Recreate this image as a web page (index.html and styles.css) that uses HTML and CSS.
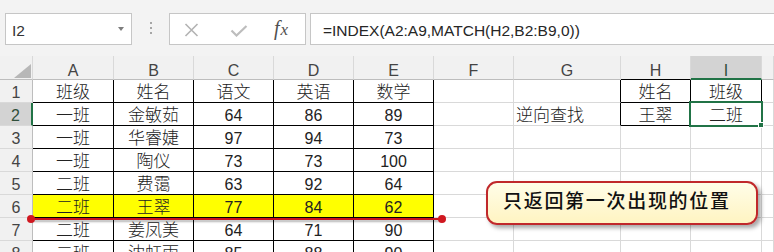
FILE: index.html
```html
<!DOCTYPE html>
<html>
<head>
<meta charset="utf-8">
<link rel="stylesheet" href="styles.css">
</head>

<body>
<div class="page">

  <div class="toolbar">
    <div class="namebox"><span>I2</span><span class="drop"></span></div>
    <div class="dots"><i></i><i></i><i></i></div>
    <div class="fxbox">
      <svg class="cancel" width="15" height="14" viewBox="0 0 15 14">
        <path d="M1.5 1 L13.5 13 M13.5 1 L1.5 13" stroke="#b3b3b3" stroke-width="1.6" fill="none"/>
      </svg>
      <svg class="enter" width="18" height="12" viewBox="0 0 18 12">
        <path d="M1.5 5.5 L6.5 10.5 L16.5 1" stroke="#bdbdbd" stroke-width="2.2" fill="none"/>
      </svg>
      <span class="fx">f<span class="fx-x">x</span></span>
    </div>
    <div class="formula">=INDEX(A2:A9,MATCH(H2,B2:B9,0))</div>
  </div>

  <div class="sheet" id="sheet"></div>

  <div class="arrow"></div>
  <div class="callout">只返回第一次出现的位置</div>

</div>

<script>

var cols = ["A", "B", "C", "D", "E", "F", "G", "H", "I", ""];

var rows = [
  ["班级", "姓名", "语文", "英语", "数学", "", "", "姓名", "班级"],
  ["一班", "金敏茹", "64", "86", "89", "", "逆向查找", "王翠", "二班"],
  ["一班", "华睿婕", "97", "94", "73"],
  ["一班", "陶仪", "73", "73", "100"],
  ["二班", "费霭", "63", "92", "64"],
  ["二班", "王翠", "77", "84", "62"],
  ["二班", "姜凤美", "64", "71", "90"],
  ["二班", "沈虹雨", "85", "88", "90"]
];

var sheet = document.getElementById("sheet");

function cell(cls, text) {
  var d = document.createElement("div");
  d.className = cls;
  d.textContent = text;
  sheet.appendChild(d);
  return d;
}

// column headers
var corner = cell("corner", "");
corner.innerHTML = '<span class="tri"></span>';
for (var c = 0; c < cols.length; c++) {
  var cls = "hd";
  if (cols[c] == "H") cls += " bb";
  if (cols[c] == "I") cls += " hd-sel";
  cell(cls, cols[c]);
}

// rows
for (var r = 0; r < rows.length; r++) {
  cell(r == 1 ? "rh rh-sel" : "rh", r + 1);
  for (var c = 0; c < 10; c++) {
    var v = rows[r][c] || "";
    var cls = "c";
    if (c < 5) cls += " br bb";
    if (c == 6 && r < 2) cls += " br";
    if ((c == 7 || c == 8) && r < 2) cls += " br bb";
    if (c == 6) cls += " left";
    if (r == 5 && c < 5) cls += " hi";
    if (/^\d+$/.test(v)) cls += " num";
    var d = cell(cls, v);
    if (r == 1 && c == 8) {
      d.className += " active";
      d.innerHTML += '<div class="selbox"></div>';
    }
  }
}

</script>
</body>
</html>
```

FILE: styles.css
```css
body {
  margin: 0;
  overflow: hidden;
  font-family: "Liberation Sans", "Noto Sans CJK SC", sans-serif;
}

.page {
  position: relative;
  width: 774px;
  height: 252px;
  overflow: hidden;
  background: #fff;
}

/* formula bar */

.toolbar {
  height: 56px;
  box-sizing: border-box;
  padding-top: 13px;
  background: #f3f3f3;
  display: flex;
  align-items: flex-start;
}

.namebox {
  margin-left: 5px;
  width: 127px;
  height: 32px;
  box-sizing: border-box;
  border: 1px solid #c6c6c6;
  background: #fff;
  padding: 4px 7px 0 6px;
  line-height: 26px;
  font-size: 15.5px;
  color: #333;
  display: flex;
  justify-content: space-between;
  align-items: flex-start;
}

.drop {
  width: 0;
  height: 0;
  margin-top: 9px;
  border-left: 3px solid transparent;
  border-right: 3px solid transparent;
  border-top: 4px solid #7d7d7d;
}

.dots {
  margin: 9px 0 0 18px;
  width: 3px;
  display: flex;
  flex-direction: column;
  gap: 3px;
}

.dots i {
  width: 2px;
  height: 2px;
  background: #a6a6a6;
}

.fxbox {
  margin-left: 16px;
  width: 137px;
  height: 32px;
  box-sizing: border-box;
  border: 1px solid #c6c6c6;
  background: #fff;
  display: flex;
  align-items: flex-start;
}

.cancel {
  margin: 9px 0 0 14px;
}

.enter {
  margin: 11px 0 0 31px;
}

.fx {
  margin-left: 26px;
  font-family: "Liberation Serif", serif;
  font-style: italic;
  font-size: 20px;
  line-height: 26px;
  padding-top: 1px;
  color: #505050;
}

.fx-x {
  font-size: 17px;
  margin-left: 1px;
}

.formula {
  flex: 1;
  margin: 0 -2px 0 4px;
  height: 32px;
  box-sizing: border-box;
  border: 1px solid #c6c6c6;
  background: #fff;
  padding: 4px 0 0 12px;
  line-height: 26px;
  font-size: 15.5px;
  color: #262626;
}

/* grid */

.sheet {
  display: grid;
  grid-template-columns: 33px 81px 80px 80px 80px 80px 80px 107px 70px 71px 1fr;
  grid-template-rows: 24px;
  grid-auto-rows: 23px;
}

.sheet > div {
  box-sizing: border-box;
  border-right: 1px solid #d9d9d9;
  border-bottom: 1px solid #d9d9d9;
  white-space: nowrap;
  overflow: hidden;
}

.corner {
  background: #f1f1f1;
  border-bottom-color: #bdbdbd !important;
  display: flex;
  justify-content: flex-end;
  align-items: flex-end;
  padding: 0 1px 1px 0;
}

.tri {
  width: 17px;
  height: 14px;
  background: #b7b7b7;
  clip-path: polygon(100% 0, 100% 100%, 0 100%);
}

.hd {
  background: #f1f1f1;
  border-bottom-color: #bdbdbd !important;
  text-align: center;
  font-size: 16px;
  padding-top: 6px;
  line-height: 17px;
  color: #444;
}

.hd-sel {
  background: #d3d3d3;
  border-bottom: 2px solid #217346 !important;
  color: #2f4f3a;
}

.rh {
  background: #f1f1f1;
  border-right-color: #bdbdbd !important;
  text-align: center;
  font-size: 16px;
  padding-top: 4px;
  line-height: 18px;
  color: #444;
}

.rh-sel {
  background: #d3d3d3;
  border-right: 2px solid #217346 !important;
  color: #2f4f3a;
}

.c {
  text-align: center;
  font-size: 17px;
  font-weight: 300;
  padding-top: 4px;
  line-height: 18px;
  color: #222;
}

.num {
  font-size: 16px;
}

.left {
  text-align: left;
  padding-left: 2px;
}

.hi {
  background: #ffff00;
}

.sheet > .br {
  border-right-color: #000;
}

.sheet > .bb {
  border-bottom-color: #000;
}

.hd.bb {
  border-bottom-color: #000 !important;
}

.active {
  position: relative;
  overflow: visible !important;
}

.selbox {
  position: absolute;
  left: -2px;
  top: -2px;
  width: 74px;
  height: 26px;
  box-sizing: border-box;
  border: 2px solid #217346;
}

.selbox::after {
  content: "";
  position: absolute;
  right: -3px;
  bottom: -3px;
  width: 6px;
  height: 6px;
  box-sizing: border-box;
  border: 1px solid #fff;
  background: #217346;
}

/* annotation */

.arrow {
  position: absolute;
  left: 31px;
  top: 218px;
  width: 411px;
  height: 2px;
  background: #c8141c;
  box-shadow: 0 2px 2px rgba(0, 0, 0, 0.3);
}

.arrow::before,
.arrow::after {
  content: "";
  position: absolute;
  top: -3px;
  width: 8px;
  height: 8px;
  border-radius: 50%;
  background: #d01820;
}

.arrow::before {
  left: -4px;
}

.arrow::after {
  right: -4px;
}

.callout {
  position: absolute;
  left: 486px;
  top: 181px;
  width: 272px;
  height: 44px;
  box-sizing: border-box;
  border: 2px solid #c0282b;
  border-radius: 11px;
  background: linear-gradient(#fffde8, #fff4c2);
  box-shadow: 3px 3px 4px rgba(0, 0, 0, 0.35);
  padding-left: 15px;
  line-height: 34px;
  font-family: "Noto Sans CJK SC", sans-serif;
  font-size: 19px;
  font-weight: 500;
  letter-spacing: 1.7px;
  color: #111;
}
```
